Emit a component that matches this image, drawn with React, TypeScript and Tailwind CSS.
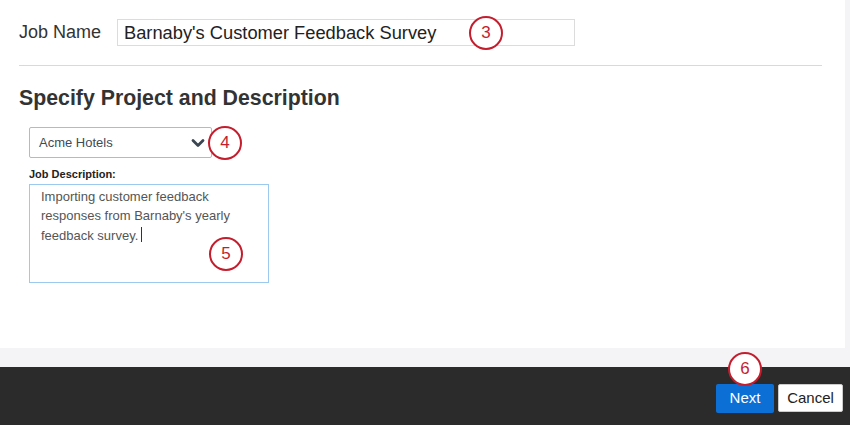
import React from 'react';

const Marker = ({ n, className }: { n: number; className: string }) => (
  <div
    className={`absolute flex h-[34px] w-[34px] items-center justify-center rounded-full border-[2.5px] border-[#c41e2e] bg-white text-[17px] text-[#c41e2e] ${className}`}
  >
    {n}
  </div>
);

export default function App() {
  return (
    <div className="relative flex h-[425px] w-[850px] flex-col overflow-hidden bg-[#f4f4f6] font-['Liberation_Sans',Arial,sans-serif] text-[#333]">
      <div className="flex h-[348px]">
        <div className="w-[845px] bg-white pl-[19px] pr-[23px]">
          <div className="flex items-center pt-[19px]">
            <span className="w-[98px] text-[18px] text-[#333]">Job Name</span>
            <div className="flex h-[27px] w-[458px] items-center border border-[#dcdcdc] px-[6px] text-[18.3px] text-[#222]">
              Barnaby's Customer Feedback Survey
            </div>
          </div>
          <div className="mt-[19px] border-t border-[#d9d9d9]" />
          <h2 className="mt-[19px] text-[21.3px] font-bold leading-[26px] text-[#333]">
            Specify Project and Description
          </h2>
          <div className="ml-[10px] mt-[16px]">
            <div className="flex h-[31px] w-[183px] items-center justify-between rounded-[2px] border border-[#b9b9b9] pl-[9px] pr-[6px] text-[13px] text-[#3e4a56]">
              <span>Acme Hotels</span>
              <svg width="14" height="10" viewBox="0 0 14 10" fill="none">
                <path d="M2 2.5 L7 7.5 L12 2.5" stroke="#3a4652" strokeWidth="2.8" strokeLinecap="round" strokeLinejoin="round" />
              </svg>
            </div>
            <div className="mt-[9px] text-[11px] font-bold leading-[14px] text-[#222]">Job Description:</div>
            <div className="mt-[3px] h-[99px] w-[240px] border border-[#9cc9ef] px-[11px] pt-[3px] text-[13px] leading-[18.5px] text-[#555]">
              Importing customer feedback responses from Barnaby's yearly feedback survey.
              <span className="ml-[3px] inline-block h-[15px] w-px translate-y-[2px] bg-[#333]" />
            </div>
          </div>
        </div>
      </div>
      <div className="h-[19px]" />
      <div className="flex h-[58px] items-start justify-end gap-[4px] bg-[#2b2b2b] pr-[7px] pt-[17px]">
        <button className="h-[29px] w-[58px] rounded-[2px] bg-[#0b6fd6] text-[15px] text-white">Next</button>
        <button className="h-[28px] w-[65px] rounded-[2px] border border-[#ccc] bg-white text-[15px] text-[#222]">Cancel</button>
      </div>

      <Marker n={3} className="left-[469px] top-[16px]" />
      <Marker n={4} className="left-[208px] top-[126px]" />
      <Marker n={5} className="left-[209px] top-[237px]" />
      <Marker n={6} className="left-[728px] top-[352px]" />
    </div>
  );
}
